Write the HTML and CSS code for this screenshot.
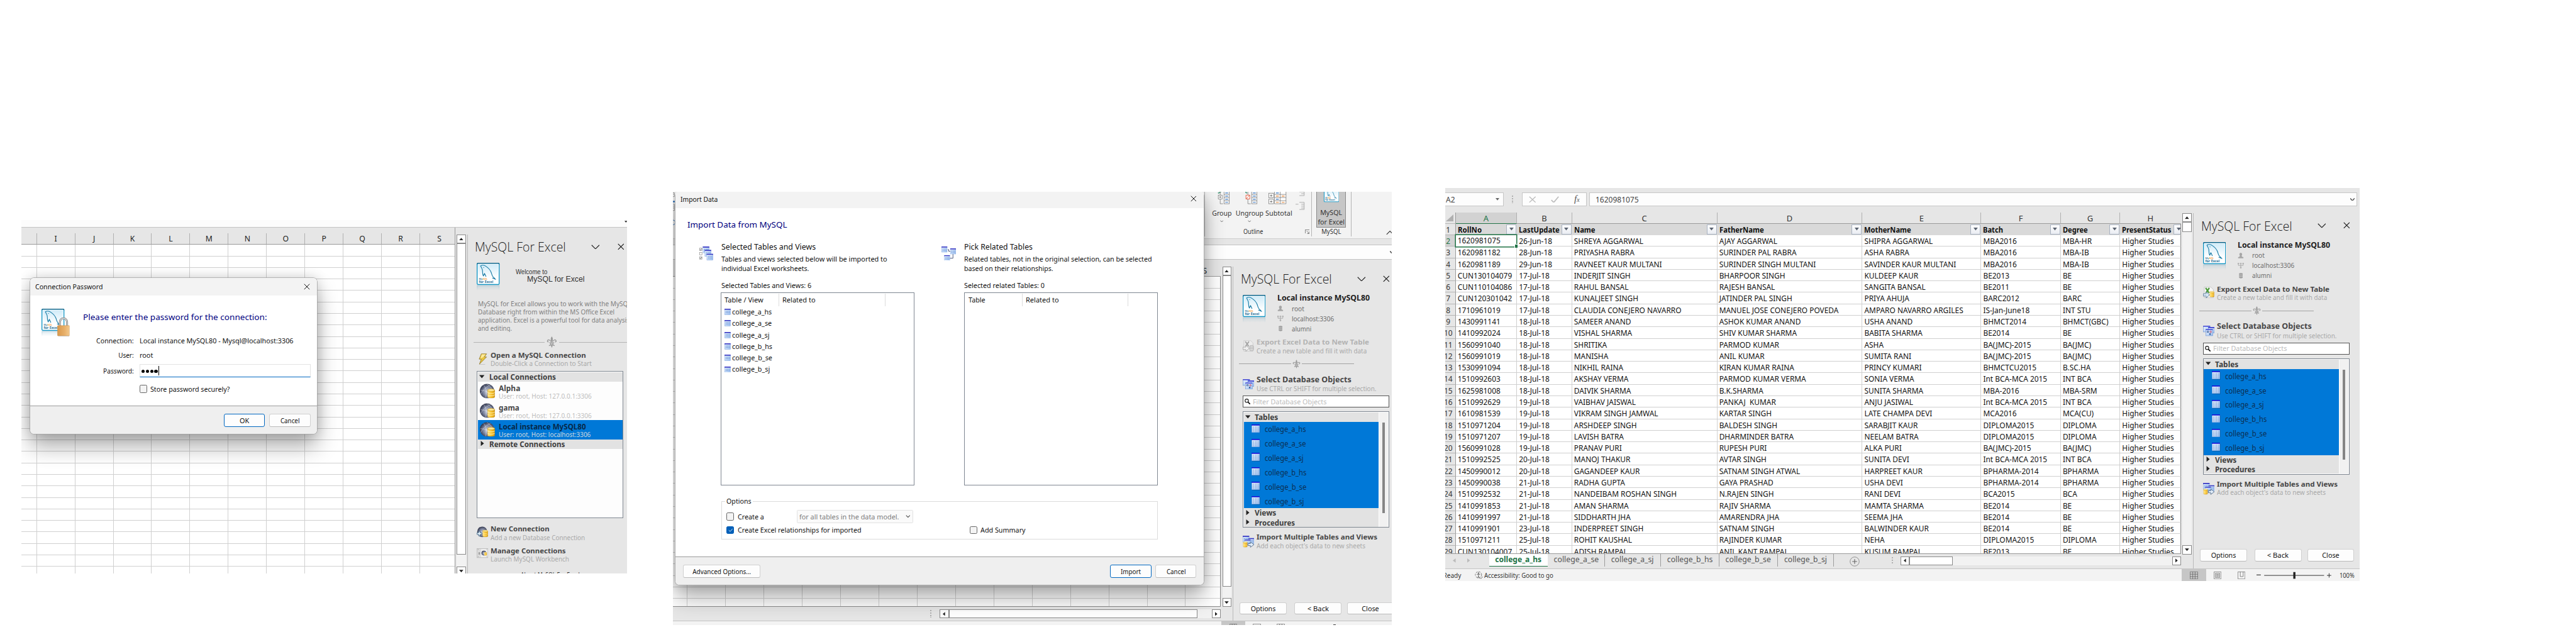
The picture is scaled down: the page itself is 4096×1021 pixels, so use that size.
FILE: index.html
```html
<!DOCTYPE html>
<html lang="en">
<head>
<meta charset="utf-8">
<title>MySQL for Excel</title>
<link rel="stylesheet" href="styles.css">
</head>
<body>
<svg class="defs" width="0" height="0">
  <defs>
    <linearGradient id="sky" x1="0" y1="0" x2="0" y2="1"><stop offset="0" stop-color="#cdeaf8"/><stop offset=".7" stop-color="#fff"/></linearGradient>
    <linearGradient id="gold" x1="0" y1="0" x2="1" y2="0"><stop offset="0" stop-color="#ffe58a"/><stop offset=".5" stop-color="#fbc62d"/><stop offset="1" stop-color="#d89a14"/></linearGradient>
    <linearGradient id="brass" x1="0" y1="0" x2="1" y2="0"><stop offset="0" stop-color="#d8984c"/><stop offset=".6" stop-color="#e8b06a"/><stop offset="1" stop-color="#f2c98e"/></linearGradient>
    <radialGradient id="globe" cx=".55" cy=".55" r=".6"><stop offset="0" stop-color="#d5dbe8"/><stop offset=".55" stop-color="#7a829c"/><stop offset="1" stop-color="#23273c"/></radialGradient>
    <linearGradient id="cellblue" x1="0" y1="0" x2="1" y2="1"><stop offset="0" stop-color="#eef5ff"/><stop offset="1" stop-color="#9cc0f0"/></linearGradient>
    <linearGradient id="fade" x1="0" y1="0" x2="0" y2="1"><stop offset="0" stop-color="#8fb9cc" stop-opacity=".55"/><stop offset="1" stop-color="#8fb9cc" stop-opacity="0"/></linearGradient>
    <symbol id="logo" viewBox="0 0 48 60">
      <rect x="1" y="1" width="46" height="44" rx="2" fill="url(#sky)" stroke="#0b93c4" stroke-width="2"/>
      <path d="M1 3a2 2 0 0 1 2-2h42a2 2 0 0 1 2 2" fill="none" stroke="#0a5f84" stroke-width="2"/>
      <rect x="2.7" y="2.7" width="42.6" height="40.6" fill="none" stroke="#fff" stroke-width="1.2"/>
      <path d="M8 6.200c3-1.600 8-1.600 12 1.500 5 3.600 9 8.300 10.500 13 1 3.600 1.500 6 3.500 8.300l5.500 5.500-7-3M8 6.200l2.500 5c2 3 1.800 5.500 1.800 8.800 0 3 .3 5 1.700 7.500l2.300-5.500 3.200 7" fill="none" stroke="#1a7ca6" stroke-width="1.500" stroke-linejoin="round"/>
      <circle cx="14.500" cy="10" r=".9" fill="#1a7ca6"/>
      <text x="4.500" y="34.800" class="lg my">My<tspan class="sql">SQL</tspan></text>
      <text x="4.500" y="41.800" class="lg fx" textLength="30" lengthAdjust="spacingAndGlyphs">for Excel</text>
      <path d="M1 47v11M47 47v11M1 47.500h46" stroke="url(#fade)" stroke-width="1.500" fill="none"/>
      <rect x="1" y="46.500" width="46" height="11" fill="url(#fade)" opacity=".55"/>
    </symbol>
    <symbol id="lock" viewBox="0 0 26 41">
      <path d="M5.500 20v-9a7.500 8 0 0 1 15 0v9" fill="none" stroke="#7d7d7d" stroke-width="4"/>
      <path d="M5.500 20v-9a7.500 8 0 0 1 15 0v9" fill="none" stroke="#dcdcdc" stroke-width="1.800"/>
      <rect x=".5" y="18" width="25" height="21.500" rx="1" fill="url(#brass)" stroke="#c58a45" stroke-width=".6"/>
      <path d="M2 40.300h23" stroke="#8888" stroke-width="1"/>
    </symbol>
    <symbol id="fleur" viewBox="0 0 22 24">
      <g fill="none" stroke="#9b9b9b" stroke-width="1.800"><path d="M9 11c-1-4-6-5-7-2-.6 2 1 3 2.400 2M13 11c1-4 6-5 7-2 .6 2-1 3-2.400 2M6 13.500h10M9 14c0 3-2 5-4 5M13 14c0 3 2 5 4 5M8 18h6"/></g>
      <path d="M11 0c3 4 2.500 7 1 12h-2c-1.500-5-2-8 1-12zM11 15l1.600 5L11 24l-1.600-4z" fill="#9b9b9b"/>
    </symbol>
    <symbol id="bolt" viewBox="0 0 20 24">
      <path d="M3 23.500h12" stroke="#bbb" stroke-width="1.500"/>
      <path d="M7 1h11l-4.500 6.500H18L3 22.500 7 12H2.500z" fill="#e8c440" stroke="#8a7226" stroke-width="1"/>
      <path d="M8 2h8l-5 6-6 3z" fill="#fff3b0" opacity=".8"/>
    </symbol>
    <symbol id="cyl" viewBox="0 0 16 20">
      <path d="M.5 3v14c0 3.300 15 3.300 15 0V3z" fill="url(#gold)" stroke="#b98511" stroke-width=".8"/>
      <path d="M.5 7.700c0 3 15 3 15 0M.5 12.400c0 3 15 3 15 0" fill="none" stroke="#fff2b8" stroke-width="1.200"/>
      <ellipse cx="8" cy="3" rx="7.500" ry="2.500" fill="#ffe998" stroke="#c4920f" stroke-width=".8"/>
    </symbol>
    <symbol id="conn" viewBox="0 0 32 32">
      <ellipse cx="15" cy="15.500" rx="15" ry="15" fill="url(#globe)"/>
      <path d="M8 3c6 8 6 18 4 27M22 3C12 8 5 15 2 22M1 14c8 0 16 3 22 8M15 1c6 4 10 9 12 14" fill="none" stroke="#fff" stroke-width=".7" opacity=".75"/>
      <use href="#cyl" x="15.500" y="10.500" width="16" height="20.500"/>
    </symbol>
    <symbol id="newconn" viewBox="0 0 24 24">
      <ellipse cx="11.500" cy="11.500" rx="10.500" ry="11" fill="url(#globe)"/>
      <use href="#cyl" x="12" y="7" width="12" height="16"/>
      <path d="M4 10.500h3v3h3.500v3.500H7v3H4v-3H.6v-3.500H4z" fill="#e6f3fb" stroke="#325a7c" stroke-width="1"/>
    </symbol>
    <symbol id="manage" viewBox="0 0 24 21">
      <rect x=".5" y=".5" width="23" height="19" fill="#dcdcdc" stroke="#b5b5b5"/>
      <rect x="9" y="1.500" width="13.500" height="17" fill="#efefef"/>
      <path d="M2.500 2.500h1M20.500 2.500h1M2.500 17.500h1M20.500 17.500h1" stroke="#666"/>
      <path d="M4.500 8.500v4.500M4.500 8.700h1.800v4H4.500M4.500 10.800h1.800" stroke="#777" stroke-width=".8" fill="none"/>
      <circle cx="15" cy="10" r="5" fill="url(#globe)"/><use href="#cyl" x="15.500" y="7.500" width="6" height="8"/>
    </symbol>
    <symbol id="tbl" viewBox="0 0 18 18">
      <path d="M1.500 17.700h16.200V2.500" fill="none" stroke="#0005" stroke-width="1"/>
      <rect x=".4" y=".4" width="16.500" height="16.500" fill="url(#cellblue)" stroke="#5b8fd6" stroke-width=".6"/>
      <rect x="0" y="0" width="17" height="2.300" fill="#1414d8"/>
      <path d="M2.500 5h3M7.500 5h3M12.500 5h3M2.500 7.400h3M7.500 7.400h3M12.500 7.400h3M2.500 9.800h3M7.500 9.800h3M12.500 9.800h3M2.500 12.200h3M7.500 12.200h3M12.500 12.200h3M2.500 14.600h3M7.500 14.600h3M12.500 14.600h3" stroke="#86a7d8" stroke-width="1.100"/>
    </symbol>
    <symbol id="tblsm" viewBox="0 0 13 13">
      <rect x=".4" y=".4" width="12" height="12" fill="url(#cellblue)" stroke="#7aa0dd" stroke-width=".7"/>
      <rect width="12.800" height="2.200" fill="#3a3ac4"/>
      <path d="M2.500 5.500h2M5.700 5.500h2M8.900 5.500h2M2.500 8.500h2M5.700 8.500h2M8.900 8.500h2" stroke="#6f96d8" stroke-width="1.600"/>
    </symbol>
    <symbol id="picks" viewBox="0 0 29 30">
      <use href="#tblsm" x="7" y="0" width="14" height="14"/><use href="#tblsm" x="11" y="7" width="14" height="14"/><use href="#tblsm" x="15" y="15" width="14" height="14"/>
      <g fill="#fff" stroke="#8a8a8a" stroke-width=".9"><rect x=".5" y="3.500" width="5" height="5"/><rect x=".5" y="12.500" width="5" height="5"/><rect x=".5" y="21.500" width="5" height="5"/></g>
      <path d="M1.500 6l1.200 1.300L5 4.500M1.500 24l1.200 1.300L5 22.500" fill="none" stroke="#222" stroke-width=".9"/>
    </symbol>
    <symbol id="rels" viewBox="0 0 31 30">
      <path d="M13 6.500h2v3.500h4M24 15v9.500h-7" fill="none" stroke="#2b3a66" stroke-width="1.100"/>
      <use href="#tblsm" x="0" y="0" width="12.500" height="12.500"/><use href="#tblsm" x="18" y="4" width="12.500" height="12.500"/><use href="#tblsm" x="5.500" y="18" width="12.500" height="12.500"/>
    </symbol>
    <symbol id="dbobj" viewBox="0 0 24 22">
      <g fill="url(#cellblue)" stroke="#6b8fd0" stroke-width=".8"><rect x=".5" y="1" width="14" height="12"/><rect x="11" y="4" width="12.500" height="11"/><rect x="6" y="8" width="14" height="13"/></g>
      <path d="M.2 1.200h14.600M10.700 4h13M5.700 8h14.600" stroke="#2a2ad0" stroke-width="1.800"/>
      <rect x="8.500" y="11" width="3" height="3" fill="none" stroke="#33558f"/><circle cx="16" cy="12.700" r="1.600" fill="none" stroke="#c24"/><rect x="13" y="16" width="3" height="3" fill="#33558f"/>
    </symbol>
    <symbol id="multi" viewBox="0 0 24 25">
      <use href="#tblsm" x="0" y="0" width="14" height="14"/><use href="#tblsm" x="12" y="4" width="12" height="14"/><use href="#tblsm" x="4" y="8" width="13" height="12"/>
      <use href="#cyl" x=".5" y="12" width="9.500" height="12.500"/>
      <path d="M11 16.500h5v-3.500l7.500 5.500-7.500 5.500v-3.500h-5z" fill="#e3eefa" stroke="#3a5576" stroke-width="1"/>
    </symbol>
    <symbol id="export" viewBox="0 0 24 24">
      <path d="M2.500.5H16l5.500 5.500v17h-19z" fill="#f7f7f7" stroke="#b9b9b9"/>
      <path d="M5.500 2.500 12.500 13M13 2.500 6 13" stroke="#4d9a3a" stroke-width="3"/>
      <use href="#cyl" x="13.500" y="9" width="10" height="13"/>
      <path d="M.5 14.500h6v-4l7 6.500-7 6.500v-4h-6z" fill="#d7e7f6" stroke="#47678a" stroke-width="1"/>
    </symbol>
    <symbol id="exportoff" viewBox="0 0 24 24">
      <path d="M2.500.5H16l5.500 5.500v17h-19z" fill="#ececec" stroke="#c6c6c6"/>
      <path d="M5.500 2.500 12.500 13M13 2.500 6 13" stroke="#a5a5a5" stroke-width="2.500"/>
      <rect x="14.500" y="11" width="8" height="11" rx="2.500" fill="#ddd" stroke="#a8a8a8"/><path d="M14.500 14.500h8M14.500 18h8" stroke="#a8a8a8"/>
      <path d="M.5 14.500h6v-4l7 6.500-7 6.500v-4h-6z" fill="#f0f0f0" stroke="#9b9b9b" stroke-width="1"/>
    </symbol>
    <symbol id="person" viewBox="0 0 13 12"><path d="M6.500 0a3 3.200 0 0 1 2 5.500c0 2 0 2.500 3.500 3.500v2.500H1V9c3.500-1 3.500-1.500 3.500-3.500a3 3.200 0 0 1 2-5.500z" fill="#a6a6a6"/></symbol>
    <symbol id="net" viewBox="0 0 13 12"><path d="M.5.5h2v2h-2zM5.500.5h2v2h-2zM10.500.5h2v2h-2zM5.500 9h2v2h-2zM1.500 3v2.500h10V3M6.500 3v6" fill="none" stroke="#9d9d9d"/></symbol>
    <symbol id="dbgrey" viewBox="0 0 13 12"><path d="M3 1.500C3 0 10.500 0 10.500 1.500v8.500c0 2-7.500 2-7.500 0z" fill="#a0a0a0"/><path d="M3 4.200h7.500M3 7.400h7.500" stroke="#d8d8d8" stroke-width=".9"/></symbol>
    <symbol id="chev" viewBox="0 0 18 10"><path d="M1 1l8 8 8-8" fill="none" stroke="#222" stroke-width="1.500"/></symbol>
    <symbol id="chevs" viewBox="0 0 8 5"><path d="M.7.700 4 4 7.300.7" fill="none" stroke="#555" stroke-width="1.300"/></symbol>
    <symbol id="x" viewBox="0 0 14 14"><path d="M1 1l12 12M13 1 1 13" fill="none" stroke="#111" stroke-width="1.400"/></symbol>
    <symbol id="mag" viewBox="0 0 12 12"><circle cx="4.500" cy="4.300" r="3.500" fill="none" stroke="#111" stroke-width="1.400"/><path d="M7 7l4.500 4.500" stroke="#111" stroke-width="2.200"/></symbol>
    <symbol id="down" viewBox="0 0 10 6"><path d="M0 0h10L5 6z" fill="#222"/></symbol>
    <symbol id="up" viewBox="0 0 10 6"><path d="M0 6h10L5 0z" fill="#222"/></symbol>
    <symbol id="left" viewBox="0 0 6 10"><path d="M6 0v10L0 5z" fill="#222"/></symbol>
    <symbol id="right" viewBox="0 0 6 10"><path d="M0 0v10l6-5z" fill="#222"/></symbol>
  </defs>
</svg>

<main class="stage">

  <!-- Connection password -->
  <section class="shot shot-a">
    <div class="strip"><svg width="6" height="4"><use href="#down"/></svg></div>
    <div class="work">
      <div class="sheet">
        <div class="colheads" id="headsA"></div>
        <div class="lines" id="linesA"></div>
      </div>
      <div class="vscroll">
        <span class="sbtn"><svg width="9" height="6"><use href="#up"/></svg></span>
        <span class="thumb thumb-a"></span><span class="rest"></span>
        <span class="sbtn"><svg width="9" height="6"><use href="#down"/></svg></span>
      </div>
      <aside class="pane">
        <header class="pane-head"><h2><span class="t" data-w="190">MySQL For Excel</span></h2><svg class="hc" width="18" height="10"><use href="#chev"/></svg><svg class="hx" width="14" height="14"><use href="#x"/></svg></header>
        <div class="welcome">
          <svg width="48" height="60"><use href="#logo"/></svg>
          <div class="wtext"><div class="hello"><span class="t" data-w="66">Welcome to</span></div><div class="product"><span class="t" data-w="120">MySQL for Excel</span></div></div>
        </div>
        <div class="intro">
          <p><span class="t" data-w="320">MySQL for Excel allows you to work with the MySQL</span></p>
          <p><span class="t" data-w="285">Database right from within the MS Office Excel</span></p>
          <p><span class="t" data-w="316">application. Excel is a powerful tool for data analysis</span></p>
          <p><span class="t" data-w="71">and editing.</span></p>
        </div>
        <div class="rule rule-a"><i></i><svg width="22" height="24"><use href="#fleur"/></svg><i></i></div>
        <div class="act act-open"><svg width="20" height="24"><use href="#bolt"/></svg><div><h3><span class="t" data-w="199">Open a MySQL Connection</span></h3><p><span class="t" data-w="211">Double-Click a Connection to Start</span></p></div></div>
        <div class="list conns">
          <div class="grp"><svg width="11" height="8"><use href="#down"/></svg><b class="t" data-w="139">Local Connections</b></div>
          <div class="conn"><svg width="32" height="32"><use href="#conn"/></svg><div><b class="t" data-w="45">Alpha</b><br><span class="t" data-w="194">User: root, Host: 127.0.0.1:3306</span></div></div>
          <div class="conn"><svg width="32" height="32"><use href="#conn"/></svg><div><b class="t" data-w="43">gama</b><br><span class="t" data-w="194">User: root, Host: 127.0.0.1:3306</span></div></div>
          <div class="conn on"><svg width="32" height="32"><use href="#conn"/></svg><div><b class="t" data-w="182">Local instance MySQL80</b><br><span class="t" data-w="192">User: root, Host: localhost:3306</span></div></div>
          <div class="grp"><svg width="8" height="11"><use href="#right"/></svg><b class="t" data-w="158">Remote Connections</b></div>
        </div>
        <div class="act act-new"><svg width="24" height="24"><use href="#newconn"/></svg><div><h3><span class="t" data-w="123">New Connection</span></h3><p><span class="t" data-w="197">Add a new Database Connection</span></p></div></div>
        <div class="act act-man"><svg width="24" height="21"><use href="#manage"/></svg><div><h3><span class="t" data-w="157">Manage Connections</span></h3><p><span class="t" data-w="164">Launch MySQL Workbench</span></p></div></div>
        <div class="about"><span class="t" data-w="123">About MySQL For Excel</span></div>
      </aside>
    </div>

    <div class="dialog dlg-pass">
      <div class="bar"><span class="t" data-w="141">Connection Password</span><svg width="13" height="13"><use href="#x"/></svg></div>
      <div class="pbody">
        <div class="picon"><svg width="48" height="60"><use href="#logo"/></svg><svg class="lock" width="26" height="41"><use href="#lock"/></svg></div>
        <div class="pform">
          <h1><span class="t" data-w="384">Please enter the password for the connection:</span></h1>
          <div class="prow"><label><span class="t r" data-w="78">Connection:</span></label><span class="val"><span class="t" data-w="321">Local instance MySQL80 - Mysql@localhost:3306</span></span></div>
          <div class="prow"><label><span class="t r" data-w="32">User:</span></label><span class="val"><span class="t" data-w="28">root</span></span></div>
          <div class="prow pw"><label><span class="t r" data-w="64">Password:</span></label><span class="input"><i></i><i></i><i></i><i></i><u></u></span></div>
          <div class="pcheck"><span class="cb"></span><span class="t" data-w="166">Store password securely?</span></div>
        </div>
      </div>
      <div class="foot"><span class="btn prim"><span class="t c" data-w="20">OK</span></span><span class="btn"><span class="t c" data-w="40">Cancel</span></span></div>
    </div>
  </section>

  <!-- Import data -->
  <section class="shot shot-b">
    <div class="ribbon">
      <div class="sliver">
        <svg width="6" height="98"><path d="M0 2h3v8H0M0 5h3" fill="none" stroke="#888"/><path d="M0 20.500h4" stroke="#2f6fb5" stroke-width="3"/><path d="M0 26h3.500v13H0M0 30h3M0 34h3" fill="none" stroke="#888"/><path d="M0 59a5 5 0 0 1 0 10" fill="none" stroke="#2f6fb5"/></svg>
      </div>
      <div class="rgroup outline">
        <div class="rtools">
          <div class="rt g"><svg width="26" height="26"><path d="M1 3 7 0" stroke="#5aa58a" stroke-width="2.500"/><g fill="#fff" stroke="#777"><rect x="13.500" y="-3" width="11" height="28"/><path d="M13.500 5.500h11M13.500 12h11M13.500 18.500h11"/><rect x="1.500" y="7" width="8" height="8"/><path d="M5.500 0v7M5.500 15v10h6" fill="none"/></g><path d="M5.500 9v4M3.500 11h4" stroke="#555"/><path d="M16 2.500h6M16 9h6M16 15.500h6M16 22h6" stroke="#3a78c2" stroke-width="1.500"/></svg><span class="t c" data-w="41">Group</span><svg width="7" height="5"><use href="#chevs"/></svg></div>
          <div class="rt u"><svg width="26" height="26"><path d="M-2-1 4 3" stroke="#5aa58a" stroke-width="2.500"/><g fill="#fff" stroke="#777"><rect x="13.500" y="-3" width="11" height="28"/><path d="M13.500 5.500h11M13.500 12h11M13.500 18.500h11"/><path d="M5.500 0v7M5.500 15v10h6" fill="none"/></g><path d="M1.500 7h8v8h-8zM2 14.500 9 7.500" fill="#fff" stroke="#e0573a" stroke-width="1.200"/><path d="M16 2.500h6M16 9h6M16 15.500h6M16 22h6" stroke="#3a78c2" stroke-width="1.500"/></svg><span class="t c" data-w="58">Ungroup</span><svg width="7" height="5"><use href="#chevs"/></svg></div>
          <div class="rt s"><svg width="38" height="26"><g fill="#fff" stroke="#777"><path d="M12.500-3h24v28h-24zM24.500 0v25M12.500 5.500h24M12.500 12h24M12.500 18.500h24"/><rect x=".5" y="3" width="10" height="9.500"/><rect x=".5" y="15.500" width="10" height="9.500"/></g><path d="M5.500 5.500v5M3 8h5M5.500 18v5M3 20.500h5" stroke="#555"/><path d="M15.500 2.500h6M15.500 15.500h6" stroke="#3a78c2" stroke-width="1.500"/><path d="M15.500 9h6M15.500 22h6M27.500 9h6M27.500 22h6" stroke="#e8883a" stroke-width="1.500"/></svg><span class="t c" data-w="56">Subtotal</span></div>
          <div class="rt d"><svg width="20" height="40"><path d="M8 0h10M12 4h6M8 8h10M18 0v8M0 26h6M8 22h10v15H8M12 26h6M12 30h6M12 34h6" fill="none" stroke="#a9a9a9" stroke-width="1.200"/></svg></div>
        </div>
        <div class="rname"><span class="t" data-w="41">Outline</span><svg width="10" height="9"><path d="M.5 8V.5H9.500M3.500 3l5 5M9 4v4.500H4.500" fill="none" stroke="#555"/></svg></div>
      </div>
      <div class="rgroup addin">
        <div class="bigbtn"><svg width="32" height="22" viewBox="0 14 48 33" preserveAspectRatio="none"><use href="#logo" width="48" height="60"/></svg><span class="t c" data-w="46">MySQL</span><span class="t c" data-w="56">for Excel</span></div>
        <div class="rname"><span class="t c" data-w="41">MySQL</span></div>
      </div>
      <svg class="collapse" width="13" height="10"><path d="M1 9 8 2l7 7" fill="none" stroke="#333" stroke-width="1.400"/></svg>
    </div>
    <div class="fbar"><svg width="5" height="6"><path d="M0 .5l5 5" stroke="#555" stroke-width="2.200"/></svg></div>
    <div class="work">
      <div class="sheet">
        <div class="colheads" id="headsB"></div>
        <div class="lines" id="linesB"></div>
        <div class="hrow"><span class="dots"></span><span class="sbtn hb"><svg width="5" height="9"><use href="#left"/></svg></span><span class="hthumb"></span><span class="hrest"></span><span class="sbtn hb"><svg width="5" height="9"><use href="#right"/></svg></span></div>
      </div>
      <div class="vscroll">
        <span class="sbtn"><svg width="9" height="6"><use href="#up"/></svg></span>
        <span class="thumb thumb-b"></span><span class="rest"></span>
        <span class="sbtn"><svg width="9" height="6"><use href="#down"/></svg></span>
      </div>
      <aside class="pane off" data-pane></aside>
    </div>
    <div class="status"><span class="viewon"><svg width="16" height="8"><path d="M.5 8V.5h15V8M5.500 0v8M10.500 0v8M0 5h16" fill="none" stroke="#666"/></svg></span><svg width="17" height="8"><path d="M.5 8V.5h16V8M3 8V4h11v4" fill="none" stroke="#666"/></svg><svg width="17" height="8"><path d="M.5 8V.5h16V8M6 0v8M11 0v8M0 5h17" fill="none" stroke="#666"/></svg><i></i></div>

    <div class="dialog dlg-import">
      <div class="bar"><span class="t" data-w="78">Import Data</span><svg width="13" height="13"><use href="#x"/></svg></div>
      <h1><span class="t" data-w="208">Import Data from MySQL</span></h1>
      <div class="cols">
        <svg class="ci" width="29" height="30"><use href="#picks"/></svg>
        <div class="col c1">
          <h4><span class="t" data-w="197">Selected Tables and Views</span></h4>
          <p><span class="t" data-w="346">Tables and views selected below will be imported to</span></p><p><span class="t" data-w="183">individual Excel worksheets.</span></p>
          <p class="count"><span class="t" data-w="188">Selected Tables and Views: 6</span></p>
          <div class="lbox">
            <div class="lhead"><span class="lh1"><span class="t" data-w="81">Table / View</span></span><span class="lh2"><span class="t" data-w="69">Related to</span></span></div>
            <div class="li"><svg width="13" height="13"><use href="#tblsm"/></svg><span class="t" data-w="83">college_a_hs</span></div>
            <div class="li"><svg width="13" height="13"><use href="#tblsm"/></svg><span class="t" data-w="83">college_a_se</span></div>
            <div class="li"><svg width="13" height="13"><use href="#tblsm"/></svg><span class="t" data-w="78">college_a_sj</span></div>
            <div class="li"><svg width="13" height="13"><use href="#tblsm"/></svg><span class="t" data-w="84">college_b_hs</span></div>
            <div class="li"><svg width="13" height="13"><use href="#tblsm"/></svg><span class="t" data-w="84">college_b_se</span></div>
            <div class="li"><svg width="13" height="13"><use href="#tblsm"/></svg><span class="t" data-w="79">college_b_sj</span></div>
          </div>
        </div>
        <svg class="ci cj" width="31" height="30"><use href="#rels"/></svg>
        <div class="col c2">
          <h4><span class="t" data-w="143">Pick Related Tables</span></h4>
          <p><span class="t" data-w="392">Related tables, not in the original selection, can be selected</span></p><p><span class="t" data-w="186">based on their relationships.</span></p>
          <p class="count"><span class="t" data-w="168">Selected related Tables: 0</span></p>
          <div class="lbox">
            <div class="lhead"><span class="lh1"><span class="t" data-w="35">Table</span></span><span class="lh2"><span class="t" data-w="69">Related to</span></span></div>
          </div>
        </div>
      </div>
      <div class="opts">
        <span class="legend"><span class="t" data-w="52">Options</span></span>
        <div class="orow"><span class="cb"></span><span class="ot"><span class="t" data-w="55">Create a</span></span><span class="sel"><span class="t" data-w="208">for all tables in the data model.</span><svg width="10" height="6"><use href="#chevs"/></svg></span></div>
        <div class="orow"><span class="cb ck"><svg width="10" height="8"><path d="M1 4l3 3 5-6" fill="none" stroke="#fff"/></svg></span><span class="ot wide"><span class="t" data-w="258">Create Excel relationships for imported</span></span><span class="cb"></span><span class="ot"><span class="t" data-w="94">Add Summary</span></span></div>
      </div>
      <div class="foot"><span class="btn adv"><span class="t c" data-w="122">Advanced Options...</span></span><span class="sp"></span><span class="btn prim"><span class="t c" data-w="42">Import</span></span><span class="btn"><span class="t c" data-w="40">Cancel</span></span></div>
    </div>
  </section>

  <!-- Imported sheet -->
  <section class="shot shot-c">
    <div class="namebar">
      <span class="nbox"><span class="t" data-w="19">A2</span><svg width="8" height="5"><path d="M0 0h8L4 5z" fill="#666"/></svg></span>
      <span class="dots"></span>
      <span class="fxbox"><svg width="15" height="14"><path d="M1 1l13 12M14 1 1 13" stroke="#bdbdbd" stroke-width="1.800"/></svg><svg width="17" height="14"><path d="M1 8l5 5L16 1" fill="none" stroke="#bdbdbd" stroke-width="2.200"/></svg><em>f<small>x</small></em></span>
      <span class="vbox"><span class="t" data-w="90">1620981075</span><svg width="9" height="6"><path d="M0 .5l4.500 5L9 .5" fill="none" stroke="#555" stroke-width="2"/></svg></span>
    </div>
    <div class="work">
      <div class="sheet">
        <div class="data" id="data"></div>
        <div class="tabs">
          <span class="nav"><svg width="6" height="9"><path d="M6 0v9L0 4.500z" fill="#bbb"/></svg><svg width="6" height="9"><path d="M0 0v9l6-4.500z" fill="#bbb"/></svg></span>
          <span class="tab cur"><b class="t c" data-w="97">college_a_hs</b></span>
          <span class="tab tab2"><span class="t c" data-w="94">college_a_se</span></span>
          <span class="tab tab3"><span class="t c" data-w="89">college_a_sj</span></span>
          <span class="tab tab4"><span class="t c" data-w="95">college_b_hs</span></span>
          <span class="tab tab5"><span class="t c" data-w="95">college_b_se</span></span>
          <span class="tab tab6"><span class="t c" data-w="89">college_b_sj</span></span>
          <svg class="plus" width="21" height="21"><circle cx="10.500" cy="10.500" r="9.500" fill="none" stroke="#777"/><path d="M10.500 5.500v10M5.500 10.500h10" stroke="#666" stroke-width="1.500"/></svg>
          <span class="dots"></span>
          <span class="sbtn hb"><svg width="5" height="9"><use href="#left"/></svg></span><span class="hthumb"></span><span class="hrest"></span><span class="sbtn hb"><svg width="5" height="9"><use href="#right"/></svg></span>
        </div>
      </div>
      <div class="vscroll">
        <span class="sbtn"><svg width="9" height="6"><use href="#up"/></svg></span>
        <span class="thumb thumb-c"></span><span class="rest"></span>
        <span class="sbtn"><svg width="9" height="6"><use href="#down"/></svg></span>
      </div>
      <aside class="pane" data-pane></aside>
    </div>
    <div class="status3">
      <span class="ready"><span class="t r" data-w="38">Ready</span></span>
      <svg class="acc" width="19" height="18"><circle cx="9" cy="8" r="6.500" fill="none" stroke="#555" stroke-dasharray="4 2"/><circle cx="9" cy="4.500" r="1.300" fill="#444"/><path d="M5.500 7h7M9 7v4l-2 4M9 11l2 4M12 14l2 2 4-4" fill="none" stroke="#444"/></svg>
      <span class="acct"><span class="t" data-w="144">Accessibility: Good to go</span></span>
      <span class="viewon"><svg width="17" height="16"><path d="M.5.5h16v15H.5zM6 0v16M11 0v16M0 5.500h17M0 10.500h17" fill="none" stroke="#666"/></svg></span>
      <span class="view"><svg width="16" height="16"><path d="M.5.5h15v15H.5zM3.500 3.500h9v9h-9zM5 6h6M5 8h6M5 10h6" fill="none" stroke="#666"/></svg></span>
      <span class="view"><svg width="16" height="16"><path d="M.5.5h15v15H.5zM5.500 0v10.500h6V0" fill="none" stroke="#666"/></svg></span>
      <svg class="zoomer" width="158" height="16"><path d="M0 7h9" stroke="#333" stroke-width="1.500"/><path d="M16 8h125M147 8h9M151.500 3.500v9" stroke="#333" stroke-width="1.300"/><path d="M79 1v14" stroke="#222" stroke-width="4.500"/></svg>
      <span class="pct"><span class="t" data-w="31">100%</span></span>
    </div>
  </section>
</main>

<template id="objpane">
  <header class="pane-head"><h2><span class="t" data-w="190">MySQL For Excel</span></h2><svg class="hc" width="18" height="10"><use href="#chev"/></svg><svg class="hx" width="14" height="14"><use href="#x"/></svg></header>
  <div class="info">
    <svg width="48" height="60"><use href="#logo"/></svg>
    <div class="ilist">
      <b><span class="t" data-w="193">Local instance MySQL80</span></b>
      <div><svg width="13" height="12"><use href="#person"/></svg><span class="t" data-w="26">root</span></div>
      <div><svg width="13" height="12"><use href="#net"/></svg><span class="t" data-w="88">localhost:3306</span></div>
      <div><svg width="13" height="12"><use href="#dbgrey"/></svg><span class="t" data-w="41">alumni</span></div>
    </div>
  </div>
  <div class="act act-exp"><svg class="ion" width="24" height="24"><use href="#export"/></svg><svg class="ioff" width="24" height="24"><use href="#exportoff"/></svg><div><h3><span class="t" data-w="235">Export Excel Data to New Table</span></h3><p><span class="t" data-w="230">Create a new table and fill it with data</span></p></div></div>
  <div class="rule"><i></i><svg width="17" height="21"><use href="#fleur"/></svg><i></i></div>
  <div class="act act-sel"><svg width="24" height="22"><use href="#dbobj"/></svg><div><h3><span class="t" data-w="198">Select Database Objects</span></h3><p><span class="t" data-w="250">Use CTRL or SHIFT for multiple selection.</span></p></div></div>
  <div class="filter"><svg width="12" height="12"><use href="#mag"/></svg><span class="t" data-w="154">Filter Database Objects</span></div>
  <div class="list objs">
    <div class="lcol">
      <div class="grp"><svg width="11" height="8"><use href="#down"/></svg><b class="t" data-w="49">Tables</b></div>
      <div class="obj"><svg width="18" height="18"><use href="#tbl"/></svg><span class="t" data-w="86">college_a_hs</span></div>
      <div class="obj"><svg width="18" height="18"><use href="#tbl"/></svg><span class="t" data-w="86">college_a_se</span></div>
      <div class="obj"><svg width="18" height="18"><use href="#tbl"/></svg><span class="t" data-w="81">college_a_sj</span></div>
      <div class="obj"><svg width="18" height="18"><use href="#tbl"/></svg><span class="t" data-w="87">college_b_hs</span></div>
      <div class="obj"><svg width="18" height="18"><use href="#tbl"/></svg><span class="t" data-w="87">college_b_se</span></div>
      <div class="obj"><svg width="18" height="18"><use href="#tbl"/></svg><span class="t" data-w="82">college_b_sj</span></div>
      <div class="grp"><svg width="8" height="11"><use href="#right"/></svg><b class="t" data-w="45">Views</b></div>
      <div class="grp"><svg width="8" height="11"><use href="#right"/></svg><b class="t" data-w="84">Procedures</b></div>
    </div>
    <div class="lscroll"><i></i></div>
  </div>
  <div class="act act-imp"><svg width="24" height="25"><use href="#multi"/></svg><div><h3><span class="t" data-w="252">Import Multiple Tables and Views</span></h3><p><span class="t" data-w="227">Add each object's data to new sheets</span></p></div></div>
  <div class="pbtns"><span class="btn"><span class="t c" data-w="52">Options</span></span><span class="btn"><span class="t c" data-w="45">&lt; Back</span></span><span class="btn"><span class="t c" data-w="36">Close</span></span></div>
</template>
<script src="app.js"></script>
</body>
</html>
```
FILE: styles.css
```css
* { box-sizing: border-box; }
html, body { margin: 0; background: #fff; overflow: hidden; }
body { width: 4096px; height: 1021px; font-family: "Noto Sans", "Open Sans", sans-serif; color: #111; }
h1, h2, h3, h4, p { margin: 0; font-weight: 400; }
svg { display: block; flex: none; }
.defs { position: absolute; }
.lg { font: 700 6px "Open Sans", "Noto Sans", sans-serif; fill: #1b6d96; }
.lg .sql { fill: #f29111; }
.lg.my { font-weight: 600; font-size: 5.5px; }
.lg.fx { font-size: 7px; }

.stage { zoom: 0.7619; width: 5376px; height: 1340px; display: flex; align-items: flex-start; }
.shot { position: relative; overflow: hidden; display: flex; flex-direction: column; flex: none; background: #e6e6e6; }
.shot-a { width: 1265px; height: 737px; margin: 460px 0 0 44px; }
.shot-b { width: 1501px; height: 905px; margin: 400px 0 0 95px; }
.shot-c { width: 1909px; height: 821px; margin: 392px 0 0 111px; }
.t { display: inline-block; white-space: nowrap; transform-origin: 0 50%; flex: none; }
.t.r { transform-origin: 100% 50%; }
.t.c { transform-origin: 50% 50%; }
.work { display: flex; flex: 1; min-height: 0; }

/* empty sheets */
.strip { height: 15px; flex: none; background: #fcfcfc; border-bottom: 1px solid #c3c3c3; display: flex; justify-content: flex-end; padding-top: 1px; }
.sheet { display: flex; flex-direction: column; flex: none; min-height: 0; }
.shot-a .sheet { width: 906px; border-right: 1px solid #999; }
.shot-b .sheet { width: 1144px; }
.colheads { display: flex; height: 36px; padding-top: 12px; border-bottom: 1px solid #9a9a9a; flex: none; font-size: 16px; }
.colheads span { flex: none; text-align: center; line-height: 24px; border-right: 1px solid #b0b0b0; overflow: hidden; color: #222; }
.colheads span:last-child { border-right: 0; }
.lines { flex: 1; min-height: 0; overflow: hidden; background: #fff; }
.lrow { display: flex; height: 24px; border-bottom: 1px solid #d0d0d0; }
.lrow i { flex: none; border-right: 1px solid #d0d0d0; }
.shot-b .lines { border-right: 1px solid #888; border-bottom: 1px solid #8c8c8c; }

.vscroll { display: flex; flex-direction: column; flex: none; width: 19px; margin: 14px 3px 0 3px; background: #f2f2f2; }
.sbtn { width: 19px; height: 19px; flex: none; border: 1px solid #8a8a8a; background: #fff; display: flex; align-items: center; justify-content: center; }
.thumb { flex: none; border: 1px solid #8a8a8a; background: #fff; }
.rest { flex: 1; }
.thumb-a { height: 650px; }
.shot-a .vscroll .rest { flex: none; height: 25px; }
.thumb-b { height: 650px; }
.shot-b .vscroll { margin-bottom: 29px; }
.hrow, .tabs { display: flex; align-items: center; height: 28px; flex: none; }
.hrow { padding-left: 537px; height: 29px; padding-bottom: 1px; }
.dots { width: 3px; height: 15px; flex: none; background: repeating-linear-gradient(#b0b0b0 0 3px, transparent 3px 5px); }
.hrow .dots { margin-right: 17px; }
.hthumb { height: 19px; border: 1px solid #8a8a8a; border-left-width: 2px; background: #fff; flex: none; }
.hrow .hthumb { width: 519px; }
.hrest { flex: 1; height: 19px; background: #f2f2f2; }

/* ribbon */
.ribbon { height: 99px; flex: none; display: flex; background: #f3f3f3; border-bottom: 1px solid #cfcfcf; font-size: 15px; color: #333; overflow: hidden; }
.sliver { width: 1109px; flex: none; }
.rgroup { height: 93px; border-right: 1px solid #b5b5b5; display: flex; flex-direction: column; flex: none; }
.outline { width: 225px; border-left: 1px solid #b5b5b5; }
.addin { width: 82px; align-items: center; }
.rtools { display: flex; height: 75px; }
.rt { display: flex; flex-direction: column; align-items: center; flex: none; }
.rt .t { line-height: 20px; margin: 8px 0 6px; }
.rt.g { width: 62px; margin-left: 5px; }
.rt.u { width: 53px; }
.rt.s { width: 70px; }
.rt.g > svg:first-child { margin-left: 8px; }
.rt.u > svg:first-child { margin-left: 8px; }
.rt.s > svg:first-child { margin-left: -6px; }
.rname { display: flex; align-items: center; height: 18px; line-height: 18px; font-size: 13.500px; justify-content: center; position: relative; }
.outline .rname { padding-left: 80px; justify-content: flex-start; }
.outline .rname svg { margin-left: 82px; }
.bigbtn { width: 62px; height: 75px; background: #c6c6c6; border: 1px solid #8a8a8a; border-top: 0; display: flex; flex-direction: column; align-items: center; }
.bigbtn .t { line-height: 20px; }
.bigbtn svg { margin-bottom: 11px; }
.collapse { margin: 81px 0 0 73px; }
.fbar { height: 31px; margin-top: 12px; background: #fdfdfd; border-top: 1px solid #c3c3c3; border-bottom: 1px solid #c3c3c3; flex: none; display: flex; justify-content: flex-end; align-items: center; }
.status { height: 9px; flex: none; display: flex; background: #f3f3f3; border-top: 1px solid #c3c3c3; padding-left: 1145px; align-items: flex-start; overflow: hidden; }
.status svg { margin-top: 5px; }
.viewon { background: #c6c6c6; width: 50px; display: flex; justify-content: center; flex: none; align-self: stretch; }
.status > svg { margin-left: 16px; margin-right: 17px; }
.status i { width: 6px; height: 8px; background: #444; margin: 6px 0 0 83px; }

/* task pane */
.pane { flex: 1; min-width: 0; border-left: 1px solid #b9b9b9; margin-top: 14px; overflow: hidden; display: flex; flex-direction: column; position: relative; }
.pane > * { flex: none; }
.pane-head { display: flex; align-items: center; height: 44px; margin: 5px 0 0 15px; }
.pane-head h2 { font: 300 26px/44px "Open Sans", "Noto Sans", sans-serif; width: 243px; color: #1c1c1c; }
.hc { margin: -2px 36px 0 0; }
.hx { margin-top: -2px; }
.info { display: flex; margin: 6px 0 0 19px; height: 86px; }
.info > svg { margin: 5px 25px 0 0; }
.ilist b { display: block; font-size: 16.500px; line-height: 23px; height: 23px; color: #222; }
.ilist div { display: flex; align-items: center; height: 21px; line-height: 21px; font-size: 14px; color: #6d6d6d; }
.ilist div svg { margin-right: 17px; }
.act { display: flex; margin-left: 19px; }
.act > svg { margin: 6px 5px 0 0; }
.act h3 { font-weight: 700; font-size: 15px; line-height: 20px; height: 20px; color: #484848; }
.act p { font-size: 14px; line-height: 18px; height: 18px; color: #a9a9a9; }
.act-exp { margin-top: 7px; }
.off .act-exp h3 { color: #b3b3b3; }
.off .act-exp .ion, .pane:not(.off) .act-exp .ioff { display: none; }
.rule { display: flex; align-items: center; height: 35px; margin-left: 12px; }
.rule i { width: 108px; height: 1px; background: #a3a3a3; }
.rule svg { margin: 0 3px; }
.act-sel { margin-top: 5px; }
.act-sel > svg { margin-top: 9px; }
.act-sel h3 { font-size: 16.500px; line-height: 22px; height: 22px; }
.filter { display: flex; align-items: center; margin: 4px 0 0 19px; width: 306px; height: 25px; border: 1px solid #555; background: #fff; padding-left: 3px; font-size: 15px; color: #bcbcbc; line-height: 23px; }
.filter svg { margin-right: 5px; }
.list { margin-left: 19px; width: 306px; border: 1px solid #7f8791; padding: 1px; background: #fdfdfd; }
.objs { margin-top: 8px; height: 243px; display: flex; }
.lcol { width: 282px; overflow: hidden; }
.lscroll { flex: 1; margin-left: 1px; background: #f1f1f1; padding: 21px 0 0 6px; }
.lscroll i { display: block; width: 6px; height: 189px; background: #858585; }
.grp { display: flex; align-items: center; height: 20px; background: #e2e2e2; font-size: 15.500px; line-height: 20px; color: #404040; padding-left: 3px; }
.grp svg { margin: -2px 9px 0 0; }
.grp svg[width="8"] { margin: -3px 10px 0 2px; }
.obj { display: flex; align-items: center; height: 30px; background: #0078d7; font-size: 15.500px; color: #0c2f52; padding-left: 17px; line-height: 30px; }
.obj svg { margin: -3px 9px 0 0; }
.act-imp { margin-top: 9px; }
.act-imp > svg { margin-top: 8px; }
.pbtns { display: flex; gap: 12px; margin: 108px 0 0 13px; }
.pbtns .btn { width: 98px; height: 26px; flex: none; }
.pbtns .btn:first-child { margin-right: 4px; }

/* welcome pane */
.welcome { display: flex; margin: 11px 0 0 19px; height: 60px; font-family: "Liberation Sans", Arial, sans-serif; color: #333; }
.wtext { padding: 11px 0 0 33px; }
.hello { font-size: 13.500px; line-height: 15px; }
.product { font-size: 16px; line-height: 18px; padding-left: 23px; }
.intro { margin: 17px 0 0 21px; height: 67px; overflow: hidden; font-size: 14px; line-height: 17px; color: #7f7f7f; white-space: nowrap; }
.intro p { height: 17px; }
.rule-a { margin-top: 4px; height: 35px; }
.rule-a i { width: 148px; background: #b5b5b5; height: 2px; flex: none; }
.rule-a svg { margin: 0 4px; }
.act-open { margin: -1px 0 0 21px; height: 44px; }
.act-open > svg { margin: 7px 7px 0 0; }
.conns { height: 306px; }
.conn { display: flex; height: 40px; padding-left: 4px; line-height: 17px; font-size: 14px; color: #bdbdbd; white-space: nowrap; }
.conn svg { margin: 4px 7px 0 0; }
.conn div { padding-top: 5px; line-height: 16px; }
.conn b { font-size: 15.500px; color: #484848; line-height: 17px; }
.conn.on { background: #0078d7; color: #cfd6dd; }
.conn.on b { color: #06284a; }
.act-new { margin-top: 13px; }
.act-new > svg { margin-top: 5px; }
.act-man { margin-top: 7px; }
.about { margin: 15px 0 0 111px; font-size: 14px; line-height: 18px; color: #333; }

/* dialogs */
.dialog { position: absolute; display: flex; flex-direction: column; background: #fff; border-radius: 8px; font-size: 15.300px; color: #111; box-shadow: 0 0 0 1px #a4a4a4, 0 0 26px rgba(0,0,0,.16), 0 26px 44px rgba(0,0,0,.32); }
.dialog .bar { display: flex; align-items: center; justify-content: space-between; background: #f3f3f3; border-radius: 8px 8px 0 0; flex: none; }
.dialog h1 { color: #000080; font-size: 17.500px; flex: none; }
.foot { display: flex; justify-content: flex-end; gap: 9px; height: 58px; margin-top: auto; background: #efefef; border-top: 1px solid #9c9c9c; border-radius: 0 0 8px 8px; padding: 15px 14px 0; flex: none; }
.btn { display: flex; align-items: center; justify-content: center; width: 86px; height: 28px; background: #fdfdfd; border: 1px solid #d0d0d0; border-bottom-color: #bbb; border-radius: 4px; font-size: 14.500px; color: #111; }
.btn.prim { border-color: #0067c0; }
.cb { width: 16px; height: 16px; border: 1px solid #666; border-radius: 3px; background: #f4f4f4; flex: none; }
.cb.ck { background: #005fb8; border-color: #005fb8; display: flex; align-items: center; justify-content: center; }
.dlg-pass { left: 19px; top: 120px; width: 599px; height: 325px; }
.dlg-pass .bar { height: 37px; padding: 0 15px 1px 10px; }
.pbody { display: flex; }
.picon { width: 110px; padding: 27px 0 0 24px; position: relative; flex: none; }
.lock { position: absolute; left: 57px; top: 45px; }
.dlg-pass h1 { margin-top: 30px; height: 30px; line-height: 30px; }
.prow { display: flex; height: 30px; align-items: center; }
h1 + .prow { margin-top: 19px; }
.prow label { width: 106px; display: flex; justify-content: flex-end; margin-right: 13px; flex: none; }
.prow.pw { margin-top: 4px; height: 27px; }
.prow.pw label { margin-right: 12px; }
.input { width: 357px; height: 27px; border: 1px solid #e3e3e3; border-bottom: 2px solid #0067c0; display: flex; align-items: center; gap: 2px; padding-left: 3px; }
.input i { width: 7px; height: 7px; border-radius: 50%; background: #000; margin-top: 3px; }
.input u { width: 1px; height: 20px; background: #000; }
.pcheck { display: flex; align-items: center; height: 16px; margin: 17px 0 0 118px; gap: 7px; }
.dlg-import { left: 6px; top: 0; width: 1102px; height: 820px; }
.dlg-import .bar { height: 34px; padding: 0 15px 4px 10px; border-radius: 4px 4px 0 0; }
.dlg-import h1 { margin: 21px 0 0 25px; height: 28px; line-height: 28px; }
.cols { display: flex; margin-top: 20px; padding-left: 50px; }
.ci { margin: 11px 0 0; }
.cj { margin-left: 57px; }
.col { width: 404px; }
.c1 { margin-left: 15px; }
.c2 { margin-left: 16px; }
.c1 h4, .c1 > p { padding-left: 2px; }
.col h4 { font-size: 17px; height: 24px; line-height: 24px; margin-bottom: 3px; }
.col > p { height: 20px; line-height: 20px; }
.col .count { margin: 16px 0 5px; }
.lbox { height: 402px; border: 1px solid #7f8791; padding: 1px; background: #fff; }
.lhead { display: flex; height: 26px; line-height: 26px; }
.lhead span span { vertical-align: top; }
.lh1 { width: 120px; padding-left: 6px; border-right: 1px solid #dcdcdc; }
.c2 .lh1 { padding-left: 7px; }
.lh2 { width: 222px; padding-left: 7px; border-right: 1px solid #dcdcdc; }
.c2 .lh2 { width: 221px; }
.li { display: flex; align-items: center; height: 24px; line-height: 24px; padding-left: 6px; gap: 3px; }
.opts { margin: 33px 0 0 95px; width: 911px; height: 80px; border: 1px solid #dcdcdc; padding: 17px 0 0 10px; position: relative; }
.legend { position: absolute; left: 7px; top: -12px; height: 22px; line-height: 22px; background: #fff; width: 58px; padding-left: 3px; }
.orow { display: flex; align-items: center; height: 28px; }
.ot { padding-left: 7px; width: 131px; line-height: 26px; }
.ot.wide { width: 491px; }
.sel { display: flex; align-items: center; justify-content: space-between; width: 243px; height: 28px; border: 1px solid #e2e2e2; background: #fafafa; border-radius: 2px; color: #7d7d7d; padding: 0 5px 0 4px; }
.sel .t { width: 222px; }
.dlg-import .foot { gap: 8px; padding: 15px 15px 0; }
.adv { width: 136px; }
.sp { flex: 1; }

/* data sheet */
.namebar { display: flex; align-items: center; height: 51px; flex: none; padding: 9px 0 12px; font-size: 15.500px; color: #444; }
.namebar > span:not(.dots) { height: 30px; background: #fdfdfd; border: 1px solid #c6c6c6; display: flex; align-items: center; }
.nbox { width: 122px; border-left: 0 !important; padding: 0 8px 0 2px; justify-content: space-between; }
.namebar .dots { margin: 0 18px 0 17px; }
.fxbox { width: 136px; padding: 0 14px; justify-content: space-between; }
.fxbox em { font: italic 20px/26px "Liberation Serif", serif; color: #555; }
.fxbox small { font-size: 13px; }
.vbox { margin-left: 5px; width: 1603px; padding: 0 5px 0 12px; justify-content: space-between; }
.shot-c .sheet { width: 1536px; }
.data { height: 714px; overflow: hidden; border-bottom: 1px solid #999; font-size: 15.650px; flex: none; }
.dr { display: grid; grid-template-columns: 22px 128px 115px 303px 303px 248px 166px 124px 127px; height: 24px; line-height: 24px; background: #fff; }
.dr > span { border-right: 1px solid #d0d0d0; border-bottom: 1px solid #d0d0d0; padding-left: 4px; white-space: pre; overflow: hidden; position: relative; }
.dr > span:last-child { border-right-color: #8c8c8c; }
.dr > .rn { background: #e6e6e6; padding: 0; border-right-color: #9a9a9a; border-bottom-color: #b5b5b5; display: flex; justify-content: center; padding-right: 8px; color: #333; }
.dr.cells0 { background: #e6e6e6; }
.cells0 > span { text-align: center; padding: 0; border-bottom-color: #9a9a9a; border-right-color: #b0b0b0; color: #333; font-size: 17px; }
.cells0 > .hot { background: #d2d2d2; color: #217346; border-bottom: 2px solid #217346; }
.cells0 > span:last-child { border-right-color: transparent; }
.cells0 > .rn::after { content: ""; border-left: 17px solid transparent; border-bottom: 15px solid #b0b0b0; margin: 5px 0 0 5px; height: 0; }
.cells1 > span { background: #d9d9d9; border-right-color: transparent; border-bottom-color: #d9d9d9; font-weight: 700; font-size: 15.500px; }
.cells1 > .rn { font-weight: 400; }
.cells1 .t { vertical-align: top; }
.fb { position: absolute; right: 0; top: 1px; width: 21px; height: 21px; border: 1px solid #a9b3c2; background: linear-gradient(#fff, #e9ecf2); display: flex; align-items: center; justify-content: center; }
.cells1 > span:last-child .fb { right: -7px; }
.dr > .cur { overflow: visible; box-shadow: 0 0 0 2px #217346; border-color: transparent; z-index: 1; background: #fff; width: 127px; height: 23px; margin-top: 0; line-height: 23px; }
.dr > .cur::after { content: ""; position: absolute; right: -4px; bottom: -4px; width: 6px; height: 6px; background: #217346; border: 1px solid #fff; border-right: 0; border-bottom: 0; }
.dr > .rn.hot { background: #d2d2d2; color: #217346; }
.shot-c .vscroll { margin: 2px 3px 30px; }
.shot-c .pane { margin-top: 2px; }
.shot-c .work { flex: none; height: 744px; }
.thumb-c { height: 21px; }
.tabs { height: 29px; align-items: flex-start; font-size: 15.500px; color: #555; }
.nav { width: 92px; display: flex; padding: 9px 0 0 16px; gap: 24px; }
.tab { height: 25px; line-height: 23px; border-right: 1px solid #9c9c9c; display: flex; justify-content: center; flex: none; padding-bottom: 2px; }
.tab.cur { width: 122px; background: #fff; color: #217346; border-bottom: 2px solid #217346; border-right: 0; }
.tab2 { width: 120px; }
.tab3 { width: 116px; }
.tab4 { width: 122px; }
.tab5 { width: 123px; }
.tab6 { width: 117px; }
.plus { margin: 4px 67px 0 32px; }
.tabs .dots { margin: 6px 15px 0 0; }
.tabs .sbtn, .tabs .hthumb, .tabs .hrest { margin-top: 4px; }
.tabs .hthumb { width: 91px; border-left-width: 1px; }
.adv.btn { width: 162px; }
.status3 { display: flex; align-items: center; flex: none; height: 26px; background: #f3f3f3; border-top: 1px solid #c6c6c6; font-size: 13px; color: #333; }
.ready { width: 34px; display: flex; justify-content: flex-end; }
.acc { margin: 0 2px 0 26px; }
.acct { width: 1456px; }
.status3 .viewon { width: 51px; align-items: center; }
.view { width: 49px; display: flex; justify-content: center; }
.zoomer { margin: 0 15px 0 8px; }
```
FILE: app.js
```js
// column headers and ruled rows of the two blank sheets
function blank(headId, lineId, widths, labels, rows) {
  document.getElementById(headId).innerHTML = widths.map((w, i) => `<span style="width:${w}px">${labels[i] || ''}</span>`).join('');
  const row = '<div class="lrow">' + widths.slice(0, -1).map(w => `<i style="width:${w}px"></i>`).join('') + '</div>';
  document.getElementById(lineId).innerHTML = row.repeat(rows);
}
const eighty = n => Array(n).fill(80);
blank('headsA', 'linesA', [33, ...eighty(10), 80], ['', ...'IJKLMNOPQRS'], 29);
blank('headsB', 'linesB', [31, ...eighty(13), 80], [...Array(14).fill(''), 'S'], 29);

// imported table
const rows = `1620981075|26-Jun-18|SHREYA AGGARWAL|AJAY AGGARWAL|SHIPRA AGGARWAL|MBA2016|MBA-HR
1620981182|28-Jun-18|PRIYASHA RABRA|SURINDER PAL RABRA|ASHA RABRA|MBA2016|MBA-IB
1620981189|29-Jun-18|RAVNEET KAUR MULTANI|SURINDER SINGH MULTANI|SAVINDER KAUR MULTANI|MBA2016|MBA-IB
CUN130104079|17-Jul-18|INDERJIT SINGH|BHARPOOR SINGH|KULDEEP KAUR|BE2013|BE
CUN110104086|17-Jul-18|RAHUL BANSAL|RAJESH BANSAL|SANGITA BANSAL|BE2011|BE
CUN120301042|17-Jul-18|KUNALJEET SINGH|JATINDER PAL SINGH|PRIYA AHUJA|BARC2012|BARC
1710961019|17-Jul-18|CLAUDIA CONEJERO NAVARRO|MANUEL JOSE CONEJERO POVEDA|AMPARO NAVARRO ARGILES|IS-Jan-June18|INT STU
1430991141|18-Jul-18|SAMEER ANAND|ASHOK KUMAR ANAND|USHA ANAND|BHMCT2014|BHMCT(GBC)
1410992024|18-Jul-18|VISHAL SHARMA|SHIV KUMAR SHARMA|BABITA SHARMA|BE2014|BE
1560991040|18-Jul-18|SHRITIKA|PARMOD KUMAR|ASHA|BA(JMC)-2015|BA(JMC)
1560991019|18-Jul-18|MANISHA|ANIL KUMAR|SUMITA RANI|BA(JMC)-2015|BA(JMC)
1530991094|18-Jul-18|NIKHIL RAINA|KIRAN KUMAR RAINA|PRINCY KUMARI|BHMCTCU2015|B.SC.HA
1510992603|18-Jul-18|AKSHAY VERMA|PARMOD KUMAR VERMA|SONIA VERMA|Int BCA-MCA 2015|INT BCA
1625981008|18-Jul-18|DAIVIK SHARMA|B.K.SHARMA|SUNITA SHARMA|MBA-2016|MBA-SRM
1510992629|19-Jul-18|VAIBHAV JAISWAL|PANKAJ  KUMAR|ANJU JASIWAL|Int BCA-MCA 2015|INT BCA
1610981539|19-Jul-18|VIKRAM SINGH JAMWAL|KARTAR SINGH|LATE CHAMPA DEVI|MCA2016|MCA(CU)
1510971204|19-Jul-18|ARSHDEEP SINGH|BALDESH SINGH|SARABJIT KAUR|DIPLOMA2015|DIPLOMA
1510971207|19-Jul-18|LAVISH BATRA|DHARMINDER BATRA|NEELAM BATRA|DIPLOMA2015|DIPLOMA
1560991028|19-Jul-18|PRANAV PURI|RUPESH PURI|ALKA PURI|BA(JMC)-2015|BA(JMC)
1510992525|20-Jul-18|MANOJ THAKUR|AVTAR SINGH|SUNITA DEVI|Int BCA-MCA 2015|INT BCA
1450990012|20-Jul-18|GAGANDEEP KAUR|SATNAM SINGH ATWAL|HARPREET KAUR|BPHARMA-2014|BPHARMA
1450990038|21-Jul-18|RADHA GUPTA|GAYA PRASHAD|USHA DEVI|BPHARMA-2014|BPHARMA
1510992532|21-Jul-18|NANDEIBAM ROSHAN SINGH|N.RAJEN SINGH|RANI DEVI|BCA2015|BCA
1410991853|21-Jul-18|AMAN SHARMA|RAJIV SHARMA|MAMTA SHARMA|BE2014|BE
1410991997|21-Jul-18|SIDDHARTH JHA|AMARENDRA JHA|SEEMA JHA|BE2014|BE
1410991901|23-Jul-18|INDERPREET SINGH|SATNAM SINGH|BALWINDER KAUR|BE2014|BE
1510971211|25-Jul-18|ROHIT KAUSHAL|RAJINDER KUMAR|NEHA|DIPLOMA2015|DIPLOMA
CUN130104007|25-Jul-18|ADISH RAMPAL|ANIL KANT RAMPAL|KUSUM RAMPAL|BE2013|BE`.split('\n');

const heads = [['RollNo', 50], ['LastUpdate', 85], ['Name', 44], ['FatherName', 93], ['MotherName', 98], ['Batch', 42], ['Degree', 52], ['PresentStatus', 103]];
const arrow = '<span class="fb"><svg width="9" height="6"><path d="M0 0h9L4.500 6z" fill="#5a6270"/></svg></span>';
let html = '<div class="dr cells0"><span class="rn"></span>' + [...'ABCDEFGH'].map((c, i) => `<span class="${i ? '' : 'hot'}">${c}</span>`).join('') + '</div>';
html += '<div class="dr cells1"><span class="rn">1</span>' + heads.map(h => `<span><span class="t" data-w="${h[1]}">${h[0]}</span>${arrow}</span>`).join('') + '</div>';
rows.forEach((r, n) => {
  html += `<div class="dr"><span class="rn${n ? '' : ' hot'}">${n + 2}</span>` +
    [...r.split('|'), 'Higher Studies'].map((c, i) => `<span class="${!n && !i ? 'cur' : ''}">${c}</span>`).join('') + '</div>';
});
document.getElementById('data').innerHTML = html;

document.querySelectorAll('[data-pane]').forEach(p => p.append(document.getElementById('objpane').content.cloneNode(true)));

const k = document.querySelector('.stage').getBoundingClientRect().width / 5376;
document.querySelectorAll('.t[data-w]').forEach(e => {
  const range = document.createRange();
  range.selectNodeContents(e);
  const w = range.getBoundingClientRect().width;
  if (w) e.style.transform = `scaleX(${(e.dataset.w * k / w).toFixed(4)})`;
});
```
